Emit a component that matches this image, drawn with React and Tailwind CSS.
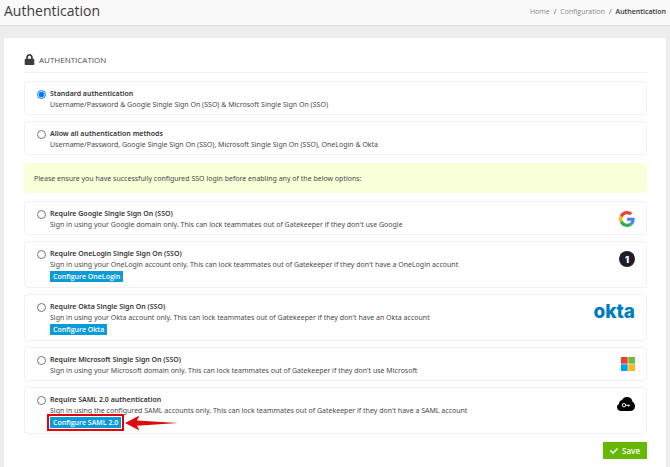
import React, { useState } from 'react';
import { FaLock, FaCheck } from 'react-icons/fa';

const GoogleLogo = () => (
  <svg viewBox="0 0 48 48" className="size-4" aria-label="Google">
    <path fill="#EA4335" d="M24 9.5c3.54 0 6.71 1.22 9.21 3.6l6.85-6.85C35.9 2.38 30.47 0 24 0 14.62 0 6.51 5.38 2.56 13.22l7.98 6.19C12.43 13.72 17.74 9.5 24 9.5z" />
    <path fill="#4285F4" d="M46.98 24.55c0-1.57-.15-3.09-.38-4.55H24v9.02h12.94c-.58 2.96-2.26 5.48-4.78 7.18l7.73 6c4.51-4.18 7.09-10.36 7.09-17.65z" />
    <path fill="#FBBC05" d="M10.53 28.59c-.48-1.45-.76-2.99-.76-4.59s.27-3.14.76-4.59l-7.98-6.19C.92 16.46 0 20.12 0 24c0 3.88.92 7.54 2.56 10.78l7.97-6.19z" />
    <path fill="#34A853" d="M24 48c6.48 0 11.93-2.13 15.89-5.81l-7.73-6c-2.15 1.45-4.92 2.3-8.16 2.3-6.26 0-11.57-4.22-13.47-9.91l-7.98 6.19C6.51 42.62 14.62 48 24 48z" />
  </svg>
);

const OneLoginLogo = () => (
  <span className="flex size-4 items-center justify-center rounded-full bg-[#1c1f2a] font-['Inter',sans-serif] text-[9px] leading-none font-black text-white">
    1
  </span>
);

const OktaLogo = () => (
  <span className="font-['Inter',sans-serif] text-[19px] leading-4 font-extrabold text-[#007dc1]">okta</span>
);

const MicrosoftLogo = () => (
  <svg viewBox="0 0 14 14" className="size-3.5" aria-label="Microsoft">
    <rect width="6.7" height="6.7" fill="#f03e2a" />
    <rect x="7.3" width="6.7" height="6.7" fill="#6cbd45" />
    <rect y="7.3" width="6.7" height="6.7" fill="#00a3ee" />
    <rect x="7.3" y="7.3" width="6.7" height="6.7" fill="#fdb813" />
  </svg>
);

const SamlLogo = () => (
  <svg viewBox="0 0 18 14" className="h-3.5 w-[18px]" aria-label="SAML">
    <path d="M4.2 14C1.8 14 0 12.3 0 10.2c0-1.5.8-2.7 2-3.3C2 4.8 3.3 3.2 5 3 5.9 1 7.7 0 10 0c2.9 0 5.2 2 5.5 4.8C17 5.7 18 7.3 18 9.3c0 2.6-2 4.7-4.5 4.7z" fill="#000" />
    <circle cx="7" cy="8.2" r="1.7" fill="none" stroke="#fff" strokeWidth="1" />
    <path d="M8.7 8.2h4.3M11.6 8.2v1.3" fill="none" stroke="#fff" strokeWidth="1.1" />
  </svg>
);

const generalOptions = [
  {
    id: 'standard',
    title: 'Standard authentication',
    description: 'Username/Password & Google Single Sign On (SSO) & Microsoft Single Sign On (SSO)',
  },
  {
    id: 'all',
    title: 'Allow all authentication methods',
    description: 'Username/Password, Google Single Sign On (SSO), Microsoft Single Sign On (SSO), OneLogin & Okta',
  },
];

const ssoOptions = [
  {
    id: 'google',
    title: 'Require Google Single Sign On (SSO)',
    description: "Sign in using your Google domain only. This can lock teammates out of Gatekeeper if they don't use Google",
    logo: <GoogleLogo />,
  },
  {
    id: 'onelogin',
    title: 'Require OneLogin Single Sign On (SSO)',
    description: "Sign in using your OneLogin account only. This can lock teammates out of Gatekeeper if they don't have a OneLogin account",
    action: 'Configure OneLogin',
    logo: <OneLoginLogo />,
  },
  {
    id: 'okta',
    title: 'Require Okta Single Sign On (SSO)',
    description: "Sign in using your Okta account only. This can lock teammates out of Gatekeeper if they don't have an Okta account",
    action: 'Configure Okta',
    logo: <OktaLogo />,
  },
  {
    id: 'microsoft',
    title: 'Require Microsoft Single Sign On (SSO)',
    description: "Sign in using your Microsoft domain only. This can lock teammates out of Gatekeeper if they don't use Microsoft",
    logo: <MicrosoftLogo />,
  },
  {
    id: 'saml',
    title: 'Require SAML 2.0 authentication',
    description: "Sign in using the configured SAML accounts only. This can lock teammates out of Gatekeeper if they don't have a SAML account",
    action: 'Configure SAML 2.0',
    highlight: true,
    logo: <SamlLogo />,
  },
];

// Red frame and arrow that point at a button
const Callout = () => (
  <>
    <span className="pointer-events-none absolute -inset-[3px] border-2 border-[#e3000f]"></span>
    <svg viewBox="0 0 54 16" className="pointer-events-none absolute top-1/2 left-full ml-1 h-4 w-[54px] -translate-y-1/2">
      <path d="M0 8 14.5 0.5 12 5.5 53 8 12 10.8 14.5 15.5Z" fill="#dc0a0a" />
    </svg>
  </>
);

const AuthOption = ({ option, selected, onSelect }) => (
  <div className="flex items-start rounded-sm border border-[#f1f1f1] pt-1.5 pr-[11px] pb-1 pl-3">
    <input
      type="radio"
      name="auth-method"
      id={option.id}
      checked={selected === option.id}
      onChange={() => onSelect(option.id)}
      className="mt-0.5 size-[9px] shrink-0"
    />
    <div className="ml-1 min-w-0 flex-1">
      <label htmlFor={option.id} className="block">
        <span className="block font-semibold text-[#333]">{option.title}</span>
        <span className="block">{option.description}</span>
      </label>
      {option.action && (
        <div className="relative mt-px mb-px w-fit">
          <button type="button" className="block bg-[#0a9bd8] px-[3px] font-['Open_Sans',sans-serif] font-semibold text-white">
            {option.action}
          </button>
          {option.highlight && <Callout />}
        </div>
      )}
    </div>
    <div className="mt-[3px] flex shrink-0">{option.logo}</div>
  </div>
);

const App = () => {
  const [selected, setSelected] = useState('standard');

  return (
    <div className="flex min-h-screen flex-col bg-[#ededed] font-['Noto_Sans',sans-serif] text-[7px] leading-[11px] text-[#4a4a4a]">
      <header className="flex items-center justify-between border-b border-[#e0e0e0] bg-[#f9f9f9] pt-px pr-1 pb-1 pl-1 font-['Open_Sans',sans-serif]">
        <h1 className="text-sm leading-5 text-[#3c3c3c]">Authentication</h1>
        <nav aria-label="Breadcrumb" className="flex gap-1">
          <a href="#home" className="text-[#888]">Home</a>
          <span>/</span>
          <a href="#configuration" className="text-[#888]">Configuration</a>
          <span>/</span>
          <span className="font-semibold text-[#333]">Authentication</span>
        </nav>
      </header>

      <main className="mx-1 mt-3 flex-1 bg-white pt-4 pr-[19px] pb-2 pl-5">
        <h2 className="flex items-center gap-1 border-b border-[#f0f0f0] pb-[7px] font-['Open_Sans',sans-serif] text-[8px] leading-[11px]">
          <FaLock className="size-[11px] text-[#3b3b42]" />
          AUTHENTICATION
        </h2>

        <form onSubmit={(e) => e.preventDefault()}>
          <div className="mt-2 flex flex-col gap-1.5">
            {generalOptions.map(option => (
              <AuthOption key={option.id} option={option} selected={selected} onSelect={setSelected} />
            ))}
          </div>

          <p className="my-2 rounded-sm bg-[#f8ffd9] px-2.5 pt-2.5 pb-2 leading-3">
            Please ensure you have successfully configured SSO login before enabling any of the below options:
          </p>

          <div className="flex flex-col gap-1.5">
            {ssoOptions.map(option => (
              <AuthOption key={option.id} option={option} selected={selected} onSelect={setSelected} />
            ))}
          </div>

          <div className="mt-2 flex justify-end">
            <button type="submit" className="flex items-center gap-1 bg-[#66b800] px-[7px] py-[3px] font-['Open_Sans',sans-serif] text-[8px] leading-[11px] font-semibold text-white">
              <FaCheck className="size-2" />
              Save
            </button>
          </div>
        </form>
      </main>
    </div>
  );
};

export default App;
